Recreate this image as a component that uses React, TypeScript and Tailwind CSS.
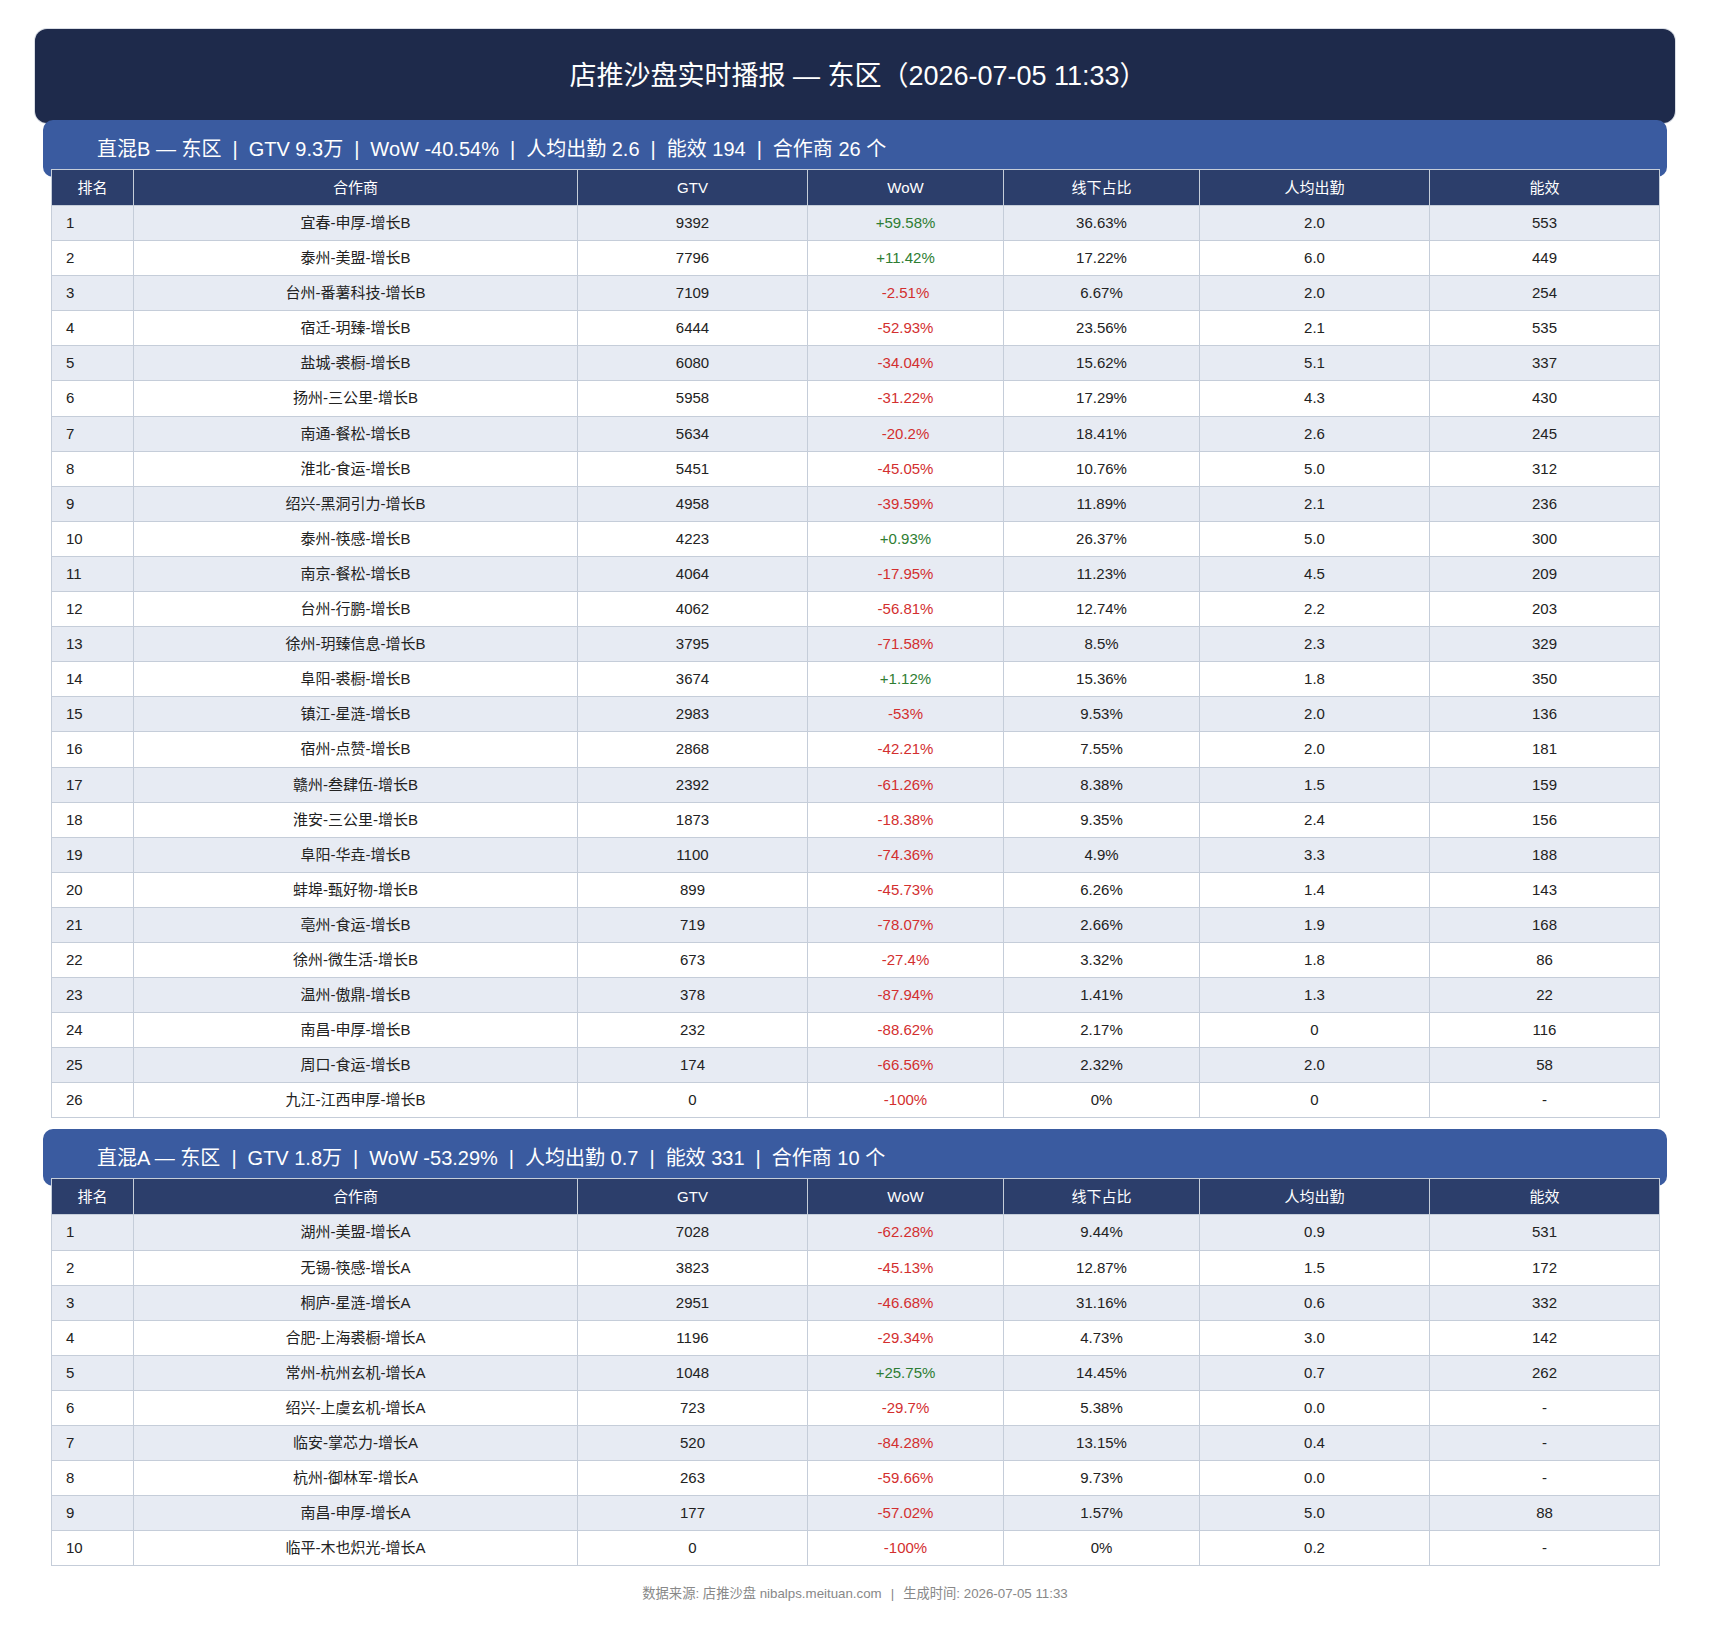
import React from "react";

type Row = [number, string, string, string, string, string, string];

const tableB: Row[] = [
  [1, "宜春-申厚-增长B", "9392", "+59.58%", "36.63%", "2.0", "553"],
  [2, "泰州-美盟-增长B", "7796", "+11.42%", "17.22%", "6.0", "449"],
  [3, "台州-番薯科技-增长B", "7109", "-2.51%", "6.67%", "2.0", "254"],
  [4, "宿迁-玥臻-增长B", "6444", "-52.93%", "23.56%", "2.1", "535"],
  [5, "盐城-裘橱-增长B", "6080", "-34.04%", "15.62%", "5.1", "337"],
  [6, "扬州-三公里-增长B", "5958", "-31.22%", "17.29%", "4.3", "430"],
  [7, "南通-餐松-增长B", "5634", "-20.2%", "18.41%", "2.6", "245"],
  [8, "淮北-食运-增长B", "5451", "-45.05%", "10.76%", "5.0", "312"],
  [9, "绍兴-黑洞引力-增长B", "4958", "-39.59%", "11.89%", "2.1", "236"],
  [10, "泰州-筷感-增长B", "4223", "+0.93%", "26.37%", "5.0", "300"],
  [11, "南京-餐松-增长B", "4064", "-17.95%", "11.23%", "4.5", "209"],
  [12, "台州-行鹏-增长B", "4062", "-56.81%", "12.74%", "2.2", "203"],
  [13, "徐州-玥臻信息-增长B", "3795", "-71.58%", "8.5%", "2.3", "329"],
  [14, "阜阳-裘橱-增长B", "3674", "+1.12%", "15.36%", "1.8", "350"],
  [15, "镇江-星涟-增长B", "2983", "-53%", "9.53%", "2.0", "136"],
  [16, "宿州-点赞-增长B", "2868", "-42.21%", "7.55%", "2.0", "181"],
  [17, "赣州-叁肆伍-增长B", "2392", "-61.26%", "8.38%", "1.5", "159"],
  [18, "淮安-三公里-增长B", "1873", "-18.38%", "9.35%", "2.4", "156"],
  [19, "阜阳-华垚-增长B", "1100", "-74.36%", "4.9%", "3.3", "188"],
  [20, "蚌埠-甄好物-增长B", "899", "-45.73%", "6.26%", "1.4", "143"],
  [21, "亳州-食运-增长B", "719", "-78.07%", "2.66%", "1.9", "168"],
  [22, "徐州-微生活-增长B", "673", "-27.4%", "3.32%", "1.8", "86"],
  [23, "温州-傲鼎-增长B", "378", "-87.94%", "1.41%", "1.3", "22"],
  [24, "南昌-申厚-增长B", "232", "-88.62%", "2.17%", "0", "116"],
  [25, "周口-食运-增长B", "174", "-66.56%", "2.32%", "2.0", "58"],
  [26, "九江-江西申厚-增长B", "0", "-100%", "0%", "0", "-"],
];

const tableA: Row[] = [
  [1, "湖州-美盟-增长A", "7028", "-62.28%", "9.44%", "0.9", "531"],
  [2, "无锡-筷感-增长A", "3823", "-45.13%", "12.87%", "1.5", "172"],
  [3, "桐庐-星涟-增长A", "2951", "-46.68%", "31.16%", "0.6", "332"],
  [4, "合肥-上海裘橱-增长A", "1196", "-29.34%", "4.73%", "3.0", "142"],
  [5, "常州-杭州玄机-增长A", "1048", "+25.75%", "14.45%", "0.7", "262"],
  [6, "绍兴-上虞玄机-增长A", "723", "-29.7%", "5.38%", "0.0", "-"],
  [7, "临安-掌芯力-增长A", "520", "-84.28%", "13.15%", "0.4", "-"],
  [8, "杭州-御林军-增长A", "263", "-59.66%", "9.73%", "0.0", "-"],
  [9, "南昌-申厚-增长A", "177", "-57.02%", "1.57%", "5.0", "88"],
  [10, "临平-木也炽光-增长A", "0", "-100%", "0%", "0.2", "-"],
];

const headers = ["排名", "合作商", "GTV", "WoW", "线下占比", "人均出勤", "能效"];

function Sep() {
  return <span className="px-[11px]">|</span>;
}

function Section({
  title,
  gtv,
  wow,
  att,
  eff,
  count,
  rows,
  first,
}: {
  title: string;
  gtv: string;
  wow: string;
  att: string;
  eff: string;
  count: string;
  rows: Row[];
  first?: boolean;
}) {
  return (
    <div className={first ? "mx-[8px] -mt-[3px]" : "mx-[8px] mt-[11px]"}>
      <div className="h-[57px] rounded-[10px] bg-[#3a5ba0] pl-[54px] flex items-center text-white text-[20px] leading-[24px] whitespace-pre">
        <span>{title} — 东区</span>
        <Sep />
        <span>GTV {gtv}万</span>
        <Sep />
        <span>WoW {wow}</span>
        <Sep />
        <span>人均出勤 {att}</span>
        <Sep />
        <span>能效 {eff}</span>
        <Sep />
        <span>合作商 {count} 个</span>
      </div>
      <div className="relative mx-[8px] -mt-[8px]">
        <table className="w-full table-fixed border-collapse text-[15px] leading-[18.1px] text-[#222]">
          <colgroup>
            <col className="w-[82px]" />
            <col className="w-[444px]" />
            <col className="w-[230px]" />
            <col className="w-[196px]" />
            <col className="w-[196px]" />
            <col className="w-[230px]" />
            <col className="w-[230px]" />
          </colgroup>
          <thead>
            <tr className="bg-[#2c3e6b] text-white">
              {headers.map((h) => (
                <th
                  key={h}
                  className="border border-[#c5cdd9] py-[8.5px] text-center font-normal leading-[18px]"
                >
                  {h}
                </th>
              ))}
            </tr>
          </thead>
          <tbody>
            {rows.map((r, i) => {
              const pos = r[3].startsWith("+");
              return (
                <tr key={r[0]} className={i % 2 === 0 ? "bg-[#e7ebf3]" : "bg-white"}>
                  <td className="border border-[#c5cdd9] py-[8px] pl-[14px] text-left">{r[0]}</td>
                  <td className="border border-[#c5cdd9] py-[8px] text-center">{r[1]}</td>
                  <td className="border border-[#c5cdd9] py-[8px] text-center">{r[2]}</td>
                  <td
                    className={
                      "border border-[#c5cdd9] py-[8px] text-center " +
                      (pos ? "text-[#2e7d32]" : "text-[#d32f2f]")
                    }
                  >
                    {r[3]}
                  </td>
                  <td className="border border-[#c5cdd9] py-[8px] text-center">{r[4]}</td>
                  <td className="border border-[#c5cdd9] py-[8px] text-center">{r[5]}</td>
                  <td className="border border-[#c5cdd9] py-[8px] text-center">{r[6]}</td>
                </tr>
              );
            })}
          </tbody>
        </table>
      </div>
    </div>
  );
}

export default function App() {
  return (
    <div className="min-h-[1628px] bg-white pl-[35px] pr-[34px] pt-[29px] pb-[28px] font-['Liberation_Sans','Noto_Sans_CJK_SC',sans-serif]">
      <div className="h-[94px] rounded-[12px] bg-[#1e2a4b] flex items-center justify-center pl-[6px] text-white text-[27px] leading-[32px] shadow-[0_0_0_1px_#d9dde4]">
        店推沙盘实时播报 — 东区（2026-07-05 11:33）
      </div>
      <Section
        first
        title="直混B"
        gtv="9.3"
        wow="-40.54%"
        att="2.6"
        eff="194"
        count="26"
        rows={tableB}
      />
      <Section
        title="直混A"
        gtv="1.8"
        wow="-53.29%"
        att="0.7"
        eff="331"
        count="10"
        rows={tableA}
      />
      <div className="mt-[20px] text-center text-[13.3px] leading-[16px] text-[#888]">
        数据来源: 店推沙盘 nibalps.meituan.com<span className="mx-[9px]">|</span>生成时间: 2026-07-05 11:33
      </div>
    </div>
  );
}
